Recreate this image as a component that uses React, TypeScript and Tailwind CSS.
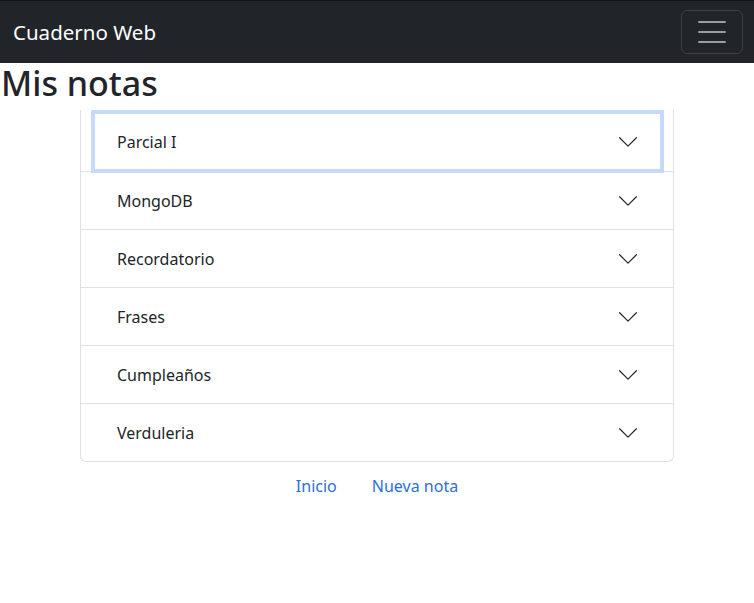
const NOTES = ['Parcial I', 'MongoDB', 'Recordatorio', 'Frases', 'Cumpleaños', 'Verduleria']

function Chevron() {
  return (
    <svg width="22" height="22" viewBox="0 0 16 16" fill="none" className="shrink-0">
      <path d="M1.9 4.9 8 11l6.1-6.1" stroke="#212529" strokeWidth="0.85" strokeLinecap="round" strokeLinejoin="round" />
    </svg>
  )
}

export default function App() {
  return (
    <div className="min-h-[603px] bg-white text-[#212529]" style={{ fontFamily: '"Noto Sans", "Segoe UI", sans-serif' }}>
      {/* Navbar */}
      <nav className="flex h-[63px] items-center justify-between border-t border-[#111315] bg-[#212529] pl-[13px] pr-[11px]">
        <span className="text-[20.5px] leading-none text-white">Cuaderno Web</span>
        <button className="flex h-[44px] w-[62px] flex-col items-center justify-center gap-[8px] rounded-[6px] border border-[#3d4146]">
          <span className="h-[2px] w-[28px] rounded bg-[#9a9da1]" />
          <span className="h-[2px] w-[28px] rounded bg-[#9a9da1]" />
          <span className="h-[2px] w-[28px] rounded bg-[#9a9da1]" />
        </button>
      </nav>

      <h1 className="pl-[1px] text-[34px] font-medium leading-[40px]">Mis notas</h1>

      {/* Accordion */}
      <div className="mx-auto mt-[7px] w-[594px] rounded-b-[6px] border-x border-b border-[#dee2e6]">
        {NOTES.map((n, i) => (
          <div key={n} className={i > 0 ? 'border-t border-[#dee2e6]' : ''}>
            {i === 0 ? (
              <div className="flex h-[61px] items-start pl-[10px] pr-[9px]">
                <div className="flex h-[63px] w-full items-center justify-between border-4 border-[#c5d9fa] pl-[22px] pr-[21px] pt-[1px]">
                  <span className="text-[16px]">{n}</span>
                  <Chevron />
                </div>
              </div>
            ) : (
              <div className="flex h-[57px] items-center justify-between pl-[36px] pr-[34px]">
                <span className="text-[16px]">{n}</span>
                <Chevron />
              </div>
            )}
          </div>
        ))}
      </div>

      {/* Links */}
      <div className="mt-[12px] flex justify-center gap-[35px] text-[16px] text-[#2d6fd8]">
        <a>Inicio</a>
        <a>Nueva nota</a>
      </div>
    </div>
  )
}
